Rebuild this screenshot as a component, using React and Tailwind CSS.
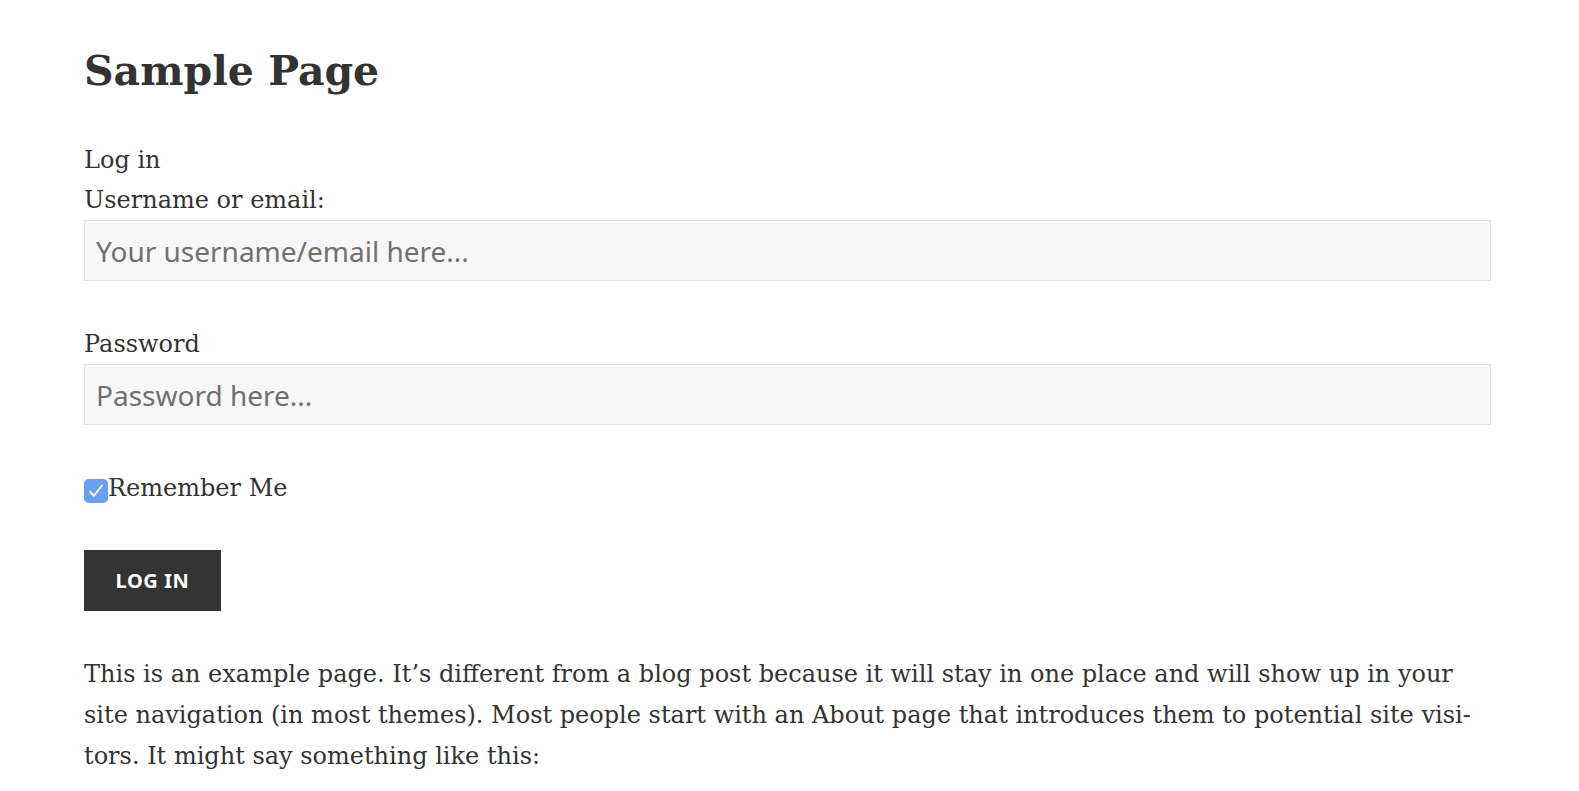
import React from "react";

export default function App() {
  const serif = "font-['DejaVu_Serif',serif]";
  return (
    <div className={`min-h-[791px] bg-white text-[#333333] ${serif}`}>
      <div className="pl-[84px] w-[1491px]">
        <h1 className="pt-[41px] text-[41px] leading-[60px] font-bold">Sample Page</h1>
        <form className="mt-[39px] text-[24px]" onSubmit={(e) => e.preventDefault()}>
          <div className="leading-[40px]">Log in</div>
          <label className="block leading-[40px]">Username or email:</label>
          <input
            type="text"
            placeholder="Your username/email here..."
            className="block w-full h-[61px] bg-[#f7f7f7] border border-[#e4e4e4] px-[11px] font-['Noto_Sans',sans-serif] text-[28px] text-[#333] placeholder:text-[#707070] outline-none"
          />
          <label className="block mt-[43px] leading-[40px]">Password</label>
          <input
            type="password"
            placeholder="Password here..."
            className="block w-full h-[61px] bg-[#f7f7f7] border border-[#e4e4e4] px-[11px] font-['Noto_Sans',sans-serif] text-[28px] text-[#333] placeholder:text-[#707070] outline-none"
          />
          <div className="mt-[43px] flex items-center h-[40px]">
            <span className="w-[24px] h-[24px] mt-[5px] rounded-[5px] bg-[#6a9ff6] flex items-center justify-center shrink-0">
              <svg width="20" height="20" viewBox="0 0 16 16" fill="none">
                <path d="M3.2 8.6 L6.3 11.8 L12.8 3.6" stroke="white" strokeWidth="1.5" strokeLinecap="round" strokeLinejoin="round" />
              </svg>
            </span>
            <span className="leading-[40px]">Remember Me</span>
          </div>
          <button
            type="submit"
            className="mt-[42px] block w-[137px] h-[61px] bg-[#333333] text-white font-['Noto_Sans',sans-serif] font-bold text-[20px] uppercase tracking-[0.03em]"
          >
            Log In
          </button>
        </form>
        <p className="mt-[43px] text-[24px] leading-[41px]">
          This is an example page. It’s different from a blog post because it will stay in one place and will show up in your
          <br />
          site navigation (in most themes). Most people start with an About page that introduces them to potential site visi-
          <br />
          tors. It might say something like this:
        </p>
      </div>
    </div>
  );
}
